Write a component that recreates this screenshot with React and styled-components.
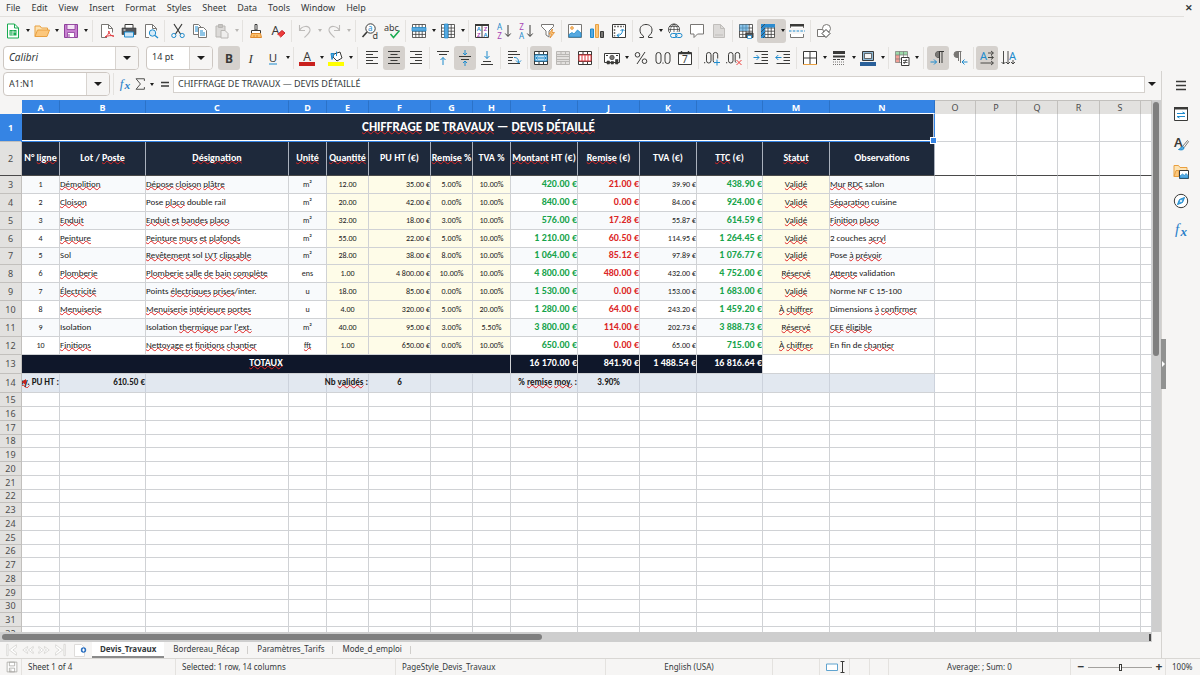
import React, { useState } from "react"
import styled, { createGlobalStyle, css } from "styled-components"

const UI_FONT = `"Noto Sans", "Open Sans", sans-serif`
const CELL_FONT = `Carlito, Lato, sans-serif`

const blue = "#1e8bcd"
const dark = "#3a3a38"
const grey = "#797774"
const accent = "#3584e4"

const GlobalStyle = createGlobalStyle`
    * {
        box-sizing: border-box;
    }
    body {
        margin: 0;
        background: #f6f5f4;
        color: #33383a;
        font-family: ${UI_FONT};
        font-size: 9px;
        overflow: hidden;
    }
    button, input {
        font: inherit;
        color: inherit;
    }
    button {
        border: 0;
        padding: 0;
        background: none;
    }
`

/* ---------- icons, all drawn on a 16 x 16 grid ---------- */

const glyph = (text, x, y, size, fill, extra) => (
    <text x={x} y={y} fontSize={size} fill={fill} stroke="none" fontFamily={UI_FONT} {...extra}>{text}</text>
)

const gridLines = <path d="M1.5 1.5h13v13h-13zM1.5 5h13M1.5 8.200h13M1.5 11.400h13M4.800 1.500v13M8 1.500v13M11.200 1.500v13" stroke={dark} strokeWidth=".8" />

const icons = {
    newDoc: <>
        <path d="M2.500 1h7l4 4v10h-11z" fill="#fff" stroke="#18ab50" />
        <path d="M9.500 1v4h4" stroke="#18ab50" />
        <path d="M4.500 7h7v5.500h-7z" fill="#18ab50" stroke="none" />
        <path d="M5 9h6M5 11h3M8 7.500v5" stroke="#fff" strokeWidth=".7" />
    </>,
    open: <>
        <path d="M1 13.500V3h5l1.500 2h6v2.500" fill="#fde3b3" stroke="#e9a040" />
        <path d="M1 13.500l2.500-6.500h12l-2.500 6.500z" fill="#fcc77c" stroke="#e9a040" />
    </>,
    save: <>
        <path d="M1.500 1.500h13v13h-13z" fill="#c77fd0" stroke="#8e3f9b" />
        <path d="M4 1.500h8v5H4z" fill="#f5e5f7" stroke="#8e3f9b" strokeWidth=".8" />
        <path d="M4.500 9.500h7v5h-7z" fill="#fff" stroke="#8e3f9b" strokeWidth=".8" />
        <path d="M6 11v3" stroke="#8e3f9b" />
    </>,
    pdf: <>
        <path d="M8 14.500H2.500v-13h7l4 4v4" fill="#fff" stroke={grey} />
        <path d="M9.500 1.500v4h4" stroke={grey} />
        <path d="M6 14c3-1.500 4-4 3.800-6 .5 3 2 5 5.200 5.200-3-1.200-6-.5-9 .8z" stroke="#e0393e" />
    </>,
    print: <>
        <path d="M4 5V1.500h8V5" fill="#fff" stroke={dark} />
        <path d="M1 5h14v6.500H1z" fill="#55565a" stroke={dark} strokeWidth=".6" />
        <path d="M3.500 9h9v5h-9z" fill="#cfe6f7" stroke={blue} />
        <path d="M2.500 7h2" stroke="#fff" />
    </>,
    preview: <>
        <path d="M6 14.500H2.500v-13h7l4 4v2" fill="#fff" stroke={grey} />
        <path d="M9.500 1.500v4h4" stroke={grey} />
        <circle cx="9.500" cy="10" r="3.200" fill="#d6ebf8" stroke={blue} />
        <path d="M12 12.500l3 2.500" stroke={blue} strokeWidth="1.300" />
    </>,
    cut: <>
        <path d="M4 1l6.500 10M12 1L5.500 11" stroke={dark} strokeWidth="1.200" />
        <circle cx="3.800" cy="12.500" r="2.100" stroke={blue} />
        <circle cx="12.200" cy="12.500" r="2.100" stroke={blue} />
    </>,
    copy: <>
        <path d="M1.500 1.500h5l2.500 2.500v7.500h-7.500z" fill="#fff" stroke={grey} />
        <path d="M6.500 4.500h5l3 3v7h-8z" fill="#fff" stroke={grey} />
        <path d="M3 4h3M3 6h3M3 8h3M8 8h3M8 10h5M8 12h5" stroke={blue} />
    </>,
    paste: <>
        <path d="M2 3h9v11H2z" fill="#dcdad8" stroke="#b9b7b4" />
        <path d="M4.500 1.500h4v3h-4z" fill="#c6c4c1" stroke="#b9b7b4" />
        <path d="M7 7.500h4l3 3v4.500H7z" fill="#efeeed" stroke="#b9b7b4" />
    </>,
    clone: <>
        <path d="M7 1.500h2v5.500H7z" fill="#fff" stroke={dark} />
        <path d="M3.500 7.500h9v3h-9z" fill="#fff" stroke={dark} />
        <path d="M3.500 10.500l-1 4h11l-1-4z" fill="#fbc16e" stroke="#e08a2e" />
        <path d="M6 14v-2M9 14v-2" stroke="#e08a2e" />
    </>,
    clear: <>
        {glyph("A", 1.500, 11.500, 12.500, dark)}
        <path d="M7.500 11.500l4.500-4 3 2.500-4.500 4.200z" fill="#ed3d3b" stroke="#c8262c" />
        <path d="M7.500 11.500l3 2.700" stroke="#fff" strokeWidth=".8" />
    </>,
    undo: <path d="M2.500 2v5.500H8M2.500 7.500C5 2.500 12 2 13 6.500c.5 3-3 5.500-5.500 8" stroke="#bdbbb9" strokeWidth="1.100" />,
    redo: <path d="M13.500 2v5.500H8M13.500 7.500C11 2.500 4 2 3 6.500c-.5 3 3 5.500 5.500 8" stroke="#bdbbb9" strokeWidth="1.100" />,
    find: <>
        <circle cx="8.500" cy="5.500" r="4.700" fill="#fff" stroke={dark} />
        <path d="M5 9l-4.500 5" stroke={dark} strokeWidth="1.600" />
        {glyph("a", 6, 8, 8, blue)}
        {glyph("d", 10.500, 15.500, 9, dark)}
    </>,
    spell: <>
        {glyph("abc", 0, 7.500, 9, dark)}
        <path d="M6.500 11l3 3.500 6-7" stroke="#18ab50" strokeWidth="1.500" />
    </>,
    row: <>
        <path d="M1.500 1.500h13v13h-13z" fill="#fff" stroke="none" />
        {gridLines}
        <path d="M1 4.500h14v3.500H1z" fill="#57a9e0" stroke={blue} strokeWidth=".7" />
    </>,
    column: <>
        <path d="M1.500 1.500h13v13h-13z" fill="#fff" stroke="none" />
        {gridLines}
        <path d="M4.500 1h3.500v14H4.500z" fill="#57a9e0" stroke={blue} strokeWidth=".7" />
    </>,
    sort: <>
        <path d="M1.500 1.500h13v13h-13z" fill="#fff" stroke={dark} />
        <path d="M1 1h14v2H1z" fill={dark} stroke="none" />
        <path d="M8 3v12" stroke={dark} />
        {glyph("A", 2.800, 8.200, 6, blue, { fontWeight: 600 })}
        {glyph("Z", 3, 14, 6, "#a845b5", { fontWeight: 600 })}
        {glyph("Z", 9.700, 8.200, 6, "#a845b5", { fontWeight: 600 })}
        {glyph("A", 9.500, 14, 6, blue, { fontWeight: 600 })}
    </>,
    sortAsc: <>
        {glyph("A", 1, 6.500, 8, blue)}
        {glyph("Z", 1.200, 15.500, 8, "#a845b5")}
        <path d="M12 2v11M9.300 10.500l2.700 3 2.700-3" stroke={dark} />
    </>,
    sortDesc: <>
        {glyph("Z", 1.200, 6.500, 8, "#a845b5")}
        {glyph("A", 1, 15.500, 8, blue)}
        <path d="M12 2v11M9.300 10.500l2.700 3 2.700-3" stroke={dark} />
    </>,
    filter: <>
        <path d="M1.500 1.500h12v2L9 8v6l-3-2V8L1.500 3.500z" fill="#fff" stroke={grey} />
        <path d="M12.500 6L9 11h2.500l-1.500 4 4.500-5.500H12z" fill="#fcc77c" stroke="#e08a2e" strokeWidth=".8" />
    </>,
    image: <>
        <path d="M1.500 1.500h13v13h-13z" fill="#fff" stroke={grey} />
        <circle cx="5" cy="5" r="1.400" fill="#fcc77c" stroke="#e08a2e" strokeWidth=".7" />
        <path d="M2 14v-2.500l3-2 2 1.500 3.500-4L14 10v4z" fill="#57a9e0" stroke={blue} strokeWidth=".8" />
    </>,
    chart: <>
        <path d="M1.500 6h3v8.500h-3z" fill="#57a9e0" stroke={blue} />
        <path d="M6.500 1.500h3v13h-3z" fill="#fcc77c" stroke="#e9a040" />
        <path d="M11.500 8.500h3v6h-3z" fill={grey} stroke={dark} />
    </>,
    pivot: <>
        <path d="M1.500 1.500h13v13h-13z" fill="#fff" stroke={dark} />
        <path d="M3 3.500h10M3.500 6v7.500" stroke={grey} strokeWidth="1.500" strokeDasharray="2 1" />
        <path d="M6 12.500c3.500 0 5.500-2 5.500-5.500M9.500 8l2-2 2 2M8 10.500l-2 2 2 1.500" stroke={blue} />
    </>,
    omega: <path d="M1.500 14.500h4v-1.500C3 11.500 2 9.500 2 7c0-3.500 2.500-5.500 6-5.500S14 3.500 14 7c0 2.500-1 4.500-3.500 6v1.500h4" stroke={dark} />,
    link: <>
        <circle cx="7" cy="6.500" r="5.500" fill="#fff" stroke={dark} strokeWidth=".9" />
        <path d="M1.500 6.500h11M7 1v11M2.500 3.500h9M4.500 11c-2-3-1-8 2.500-10 3.500 2 4.500 6 2.500 9" stroke={dark} strokeWidth=".7" />
        <path d="M3 9h13v7H3z" fill="#f6f5f4" stroke="none" />
        <rect x="3.500" y="10.500" width="6.500" height="4" rx="2" stroke={blue} />
        <rect x="8.500" y="10.500" width="6.500" height="4" rx="2" stroke={blue} />
    </>,
    comment: <path d="M1.500 1.500h13v9.500H8.500L5 14.500V11H1.500z" fill="#fff" stroke={grey} />,
    page: <>
        <path d="M2.500 1.500h7l4 4v9h-11z" fill="#dcdad8" stroke="#c0bebb" />
        <path d="M9.500 1.500v4h4M4 12h8" stroke="#c0bebb" />
    </>,
    printArea: <>
        <path d="M1.500 1.500h13v12h-13z" fill="#fff" stroke="none" />
        {gridLines}
        <path d="M1.500 1.500h9v6.500h-9z" fill="#57a9e0" stroke="none" opacity=".7" />
        <path d="M8 10h7v4.500H8z" fill="#55565a" stroke={dark} />
        <path d="M9.500 12.500h4v3h-4z" fill="#fff" stroke={blue} strokeWidth=".8" />
    </>,
    freeze: <>
        <path d="M1.500 1.500h13v13h-13z" fill="#fff" stroke="none" />
        {gridLines}
        <path d="M1 1h4v14H1zM5 1h10v3.500H5z" fill="#2a8bd0" stroke="none" />
        <path d="M1 5l4-4M1 9l4-4M1 13l4-4M3 15l2-2" stroke={dark} strokeWidth=".7" />
    </>,
    split: <>
        <path d="M1.500 5V1.500h13V5M1.500 11v3.500h13V11" fill="#fff" stroke={grey} />
        <path d="M1 1h14v2.500H1z" fill={dark} stroke="none" />
        <path d="M0 8h16" stroke={blue} strokeDasharray="2.500 1.300" strokeWidth="1.200" />
    </>,
    shapes: <>
        <path d="M1.500 6.500h7v7h-7z" fill="#fff" stroke={grey} />
        <circle cx="10.500" cy="5.500" r="4" fill="#fff" stroke={grey} />
        <path d="M10 6.500l4 4-4 4-4-4z" fill="#fff" stroke={dark} />
    </>,
    bold: glyph("B", 4, 12.500, 12, dark, { fontWeight: 700 }),
    italic: glyph("I", 5.500, 12.500, 13, dark, { fontFamily: "Liberation Serif, serif", fontStyle: "italic" }),
    underline: <>
        {glyph("U", 3.800, 11.500, 11.500, dark)}
        <path d="M4 14h8" stroke={blue} />
    </>,
    fontColor: <>
        {glyph("A", 4.200, 10.500, 12, dark)}
        <path d="M0 12h16v4H0z" fill="#c9211e" stroke="none" />
    </>,
    fill: <>
        <path d="M6 4l6-2 2 6-5 3-4-4z" fill="#fff" stroke={dark} />
        <path d="M8.500 6V1.500M3 3.500h3L4 9.500z" fill="#57a9e0" stroke={blue} />
        <path d="M0 12h16v4H0z" fill="#ffff00" stroke="none" />
    </>,
    alignLeft: <path d="M2 1.500h12M2 4.500h7M2 7.500h12M2 10.500h7M2 13.500h12" stroke={dark} />,
    alignCenter: <path d="M2 1.500h12M4.500 4.500h7M2 7.500h12M4.500 10.500h7M2 13.500h12" stroke={dark} />,
    alignRight: <path d="M2 1.500h12M7 4.500h7M2 7.500h12M7 10.500h7M2 13.500h12" stroke={dark} />,
    alignTop: <>
        <path d="M2 1.500h12M4 4.500h8" stroke={dark} />
        <path d="M8 15V7.500M5.500 10L8 7.500l2.500 2.500" stroke={blue} />
    </>,
    alignMiddle: <>
        <path d="M2 6.500h12M4 9.500h8" stroke={dark} />
        <path d="M8 0v5M6 3l2 2 2-2M8 16v-5M6 13l2-2 2 2" stroke={blue} />
    </>,
    alignBottom: <>
        <path d="M4 11.500h8M2 14.500h12" stroke={dark} />
        <path d="M8 1v7.500M5.500 6L8 8.500 10.500 6" stroke={blue} />
    </>,
    wrap: <>
        <path d="M2 1.500h9M2 4.500h12M2 7.500h5M2 10.500h4M2 13.500h12" stroke={dark} />
        <path d="M8 7.500c3 0 4.500 1 4.500 5M10 10.500l2.500 2.500 2.500-2.500" stroke={blue} />
    </>,
    mergeCenter: <>
        <path d="M1.500 1.500h13v13h-13z" fill="#fff" stroke="none" />
        <path d="M1.500 1.500h13v13h-13zM1.500 4.500h13M1.500 11.500h13M6 1.500v3M10.500 1.500v3M6 11.500v3M10.500 11.500v3" stroke={dark} />
        <path d="M2 5h12v6H2z" fill="#bfe0f5" stroke={blue} />
        <path d="M3 8h10M4.500 6.500L3 8l1.500 1.500M11.500 6.500L13 8l-1.500 1.500" stroke={blue} />
    </>,
    mergeCells: <>
        <path d="M1.500 1.500h13v13h-13zM1.500 4.500h13M1.500 11.500h13M6 1.500v3M10.500 1.500v3M6 11.500v3M10.500 11.500v3" fill="#e2e0de" stroke="#b9b7b4" />
        <path d="M2 6.500h12M2 9.500h12" stroke="#b9b7b4" />
    </>,
    unmerge: <>
        <path d="M1.500 1.500h13v13h-13zM1.500 4.500h13M1.500 11.500h13M6 1.500v3M10.500 1.500v3M6 11.500v3M10.500 11.500v3" fill="#fff" stroke={dark} />
        <path d="M2 5h12v6H2zM5 5v6M8 5v6M11 5v6" fill="#fff" stroke="#e0393e" />
    </>,
    currency: <>
        <path d="M.5 3.500h15v9H.5z" fill="#fff" stroke={dark} />
        <circle cx="8" cy="7.500" r="2.200" fill={grey} stroke={dark} strokeWidth=".7" />
        <path d="M2 5.500h2M12 5.500h2" stroke={dark} />
        <path d="M3 14v-3h2.500v3zM7 14v-2.500h2.500V14zM11.500 14V9.500H14V14z" fill={dark} stroke={dark} strokeWidth=".6" />
    </>,
    percent: <>
        <circle cx="4.500" cy="4.800" r="2.300" stroke={dark} />
        <circle cx="11.500" cy="11.200" r="2.300" stroke={dark} />
        <path d="M12 2L4 14" stroke={dark} />
    </>,
    number: <>
        <rect x="1" y="2.500" width="5" height="11" rx="2.500" stroke={dark} />
        <path d="M8 12.500v1.200" stroke={dark} />
        <rect x="10" y="2.500" width="5" height="11" rx="2.500" stroke={dark} />
    </>,
    date: <>
        <path d="M1.500 2.500h13v12h-13z" fill="#fff" stroke={dark} />
        <path d="M1.500 3.500h13M4.500 1v3M11.500 1v3" stroke={dark} strokeWidth="1.400" />
        {glyph("7", 5, 13, 10, dark)}
    </>,
    addDecimal: <>
        <path d="M.7 12v1.300" stroke={dark} />
        <rect x="2.500" y="2.500" width="4.500" height="10.500" rx="2.200" stroke={dark} />
        <path d="M13.700 8.500V4.700a2.200 2.200 0 0 0-4.500 0v6a2.200 2.200 0 0 0 1.500 2.100" stroke={dark} />
        <path d="M13 9.500v6M10 12.500h6" stroke={blue} />
    </>,
    delDecimal: <>
        <path d="M.7 12v1.300" stroke={dark} />
        <rect x="2.500" y="2.500" width="4.500" height="10.500" rx="2.200" stroke={dark} />
        <path d="M13.700 8.500V4.700a2.200 2.200 0 0 0-4.500 0v6a2.200 2.200 0 0 0 1 2" stroke={dark} />
        <path d="M10.500 10l5 5M15.500 10l-5 5" stroke="#ed3d3b" />
    </>,
    indent: <>
        <path d="M1.500 1.500H15M8.500 4.500H15M8.500 7.500H15M8.500 10.500H15M1.500 13.500H15" stroke={dark} />
        <path d="M.5 7.500H6M3.500 5L6 7.500 3.500 10" stroke={blue} />
    </>,
    outdent: <>
        <path d="M1.500 1.500H15M8.500 4.500H15M8.500 7.500H15M8.500 10.500H15M1.500 13.500H15" stroke={dark} />
        <path d="M.8 7.500H6.500M3.300 5L.8 7.500 3.300 10" stroke={blue} />
    </>,
    borders: <>
        <path d="M1.500 1.500h13v13h-13z" fill="#fff" stroke={dark} />
        <path d="M8 1.500v13M1.500 8h13" stroke={dark} />
        <path d="M1 14.500h14" stroke="#e9a040" />
    </>,
    lineStyle: <>
        <path d="M2 2.500h12" stroke={dark} strokeWidth="3" />
        <path d="M2 6.500h12" stroke={dark} strokeWidth="2" />
        <path d="M2 9.500h12" stroke={dark} strokeDasharray="3 1" />
        <path d="M2 12h12M2 14.500h12" stroke={grey} strokeDasharray="1 1" />
    </>,
    borderColor: <>
        <path d="M2.500 1.500h11v9h-11z" fill="#8fb8d4" stroke={dark} />
        <path d="M4.500 3.500h7v5h-7z" fill="#f6f5f4" stroke={dark} strokeWidth=".7" />
        <path d="M0 12h16v4H0z" fill="#2a6099" stroke="none" />
    </>,
    conditional: <>
        <path d="M1.500 1.500h12v11h-12z" fill="#fff" stroke="none" />
        <path d="M1.500 1.500h12v3.500h-12z" fill="#9bd9a9" stroke="none" />
        <path d="M1.500 5h4v7.500h-4z" fill="#f2a097" stroke="none" />
        <path d="M1.500 1.500h12v11h-12zM1.500 5h12M1.500 9h12M5.500 1.500v11M9.500 1.500v11" stroke={grey} strokeWidth=".7" />
        <path d="M7.500 7.500h7.500v8H7.500z" fill="#fff" stroke={dark} />
        <path d="M9 10.500h4.500M9 12.500h4.500M12.500 9l-2.500 5" stroke={dark} strokeWidth=".8" />
    </>,
    ltr: <>
        <path d="M14 1.500H8.500a3 3 0 0 0 0 6h1M9.500 1.500V13M12 1.500V13" stroke={dark} />
        <path d="M9 2H8a2.500 2.500 0 0 0 0 5h1z" fill={grey} stroke="none" />
        <path d="M.5 12h6M4 9.500L6.500 12 4 14.500" stroke={blue} />
    </>,
    rtl: <>
        <path d="M9.500 1.500H5a3 3 0 0 0 0 6h1.500M6.500 1.500V11M8.500 1.500V13" stroke={grey} />
        <path d="M6.500 1.500H5a3 3 0 0 0 0 6h1.500z" fill={grey} stroke="none" />
        <path d="M15.500 12h-5.500M12.500 9.500L10 12l2.500 2.500" stroke={blue} />
    </>,
    textLtr: <>
        {glyph("A", 1, 9.500, 11, blue)}
        <path d="M9 3h5M12 1l2.500 2L12 5M9 7.500h5M12 5.500l2.500 2-2.500 2M1.500 13h12.500M12 11l2.500 2-2.500 2" stroke={dark} strokeWidth=".9" />
    </>,
    textTtb: <>
        {glyph("A", 8, 9.500, 11, blue)}
        <path d="M2.500 1v13M.5 12l2 2 2-2M7 1v13M5 12l2 2 2-2M12 10v4M10 12l2 2 2-2" stroke={dark} strokeWidth=".9" />
    </>,
    fx: <>
        {glyph("f", 2, 12, 15, "#2a7fc9", { fontFamily: "Liberation Serif, serif", fontStyle: "italic" })}
        {glyph("x", 7.500, 14, 13, "#2a7fc9", { fontFamily: "Liberation Serif, serif", fontStyle: "italic", fontWeight: 700 })}
    </>,
    sum: <path d="M13 4.500V2H3.500l5 6-5 6H13v-2.500" stroke={dark} />,
    equals: <path d="M4 6.500h8M4 10h8" stroke={dark} strokeWidth="1.500" />,
    menu: <path d="M3 4.500h10M3 8.500h10M3 12.500h10" stroke={dark} strokeWidth="1.400" />,
    properties: <>
        <path d="M1.500 1.500h13v13h-13z" fill="#fff" stroke={dark} />
        <path d="M1 1h14v2.500H1z" fill={dark} stroke="none" />
        <path d="M4 7.500h8M9.500 6L12 7.500M4 10.500h8M6.500 12L4 10.500" stroke={blue} />
    </>,
    styles: <>
        {glyph("A", 1, 11.500, 13, dark, { fontWeight: 600 })}
        <path d="M14.500 5.500l-5 6 1.500 1.200 4.500-6z" fill="#fff" stroke={grey} />
        <path d="M9.500 11.500c-2 0-1.500 2.500-4 3 3 .8 5.500.5 5.500-1.800z" fill="#57a9e0" stroke={blue} />
    </>,
    gallery: <>
        <path d="M1 12.500V1.500h4.500L7 3.500h7v3" fill="#fde3b3" stroke="#e9a040" />
        <path d="M1 12.500l2-6h3v6z" fill="#fcc77c" stroke="#e9a040" />
        <path d="M6.500 6.500h9v8h-9z" fill="#fff" stroke={dark} />
        <path d="M7 14v-2l2.500-2 2 1.500 1.500-2 2 2V14z" fill="#57a9e0" stroke={blue} strokeWidth=".7" />
    </>,
    navigator: <>
        <circle cx="8" cy="8" r="6.700" fill="#fff" stroke={dark} />
        <path d="M11.500 4.500l-2 5-5 2 2-5z" fill="#57a9e0" stroke={blue} />
        <circle cx="8" cy="8" r="1" fill="#fff" stroke="none" />
    </>,
    addSheet: <>
        <path d="M1.500 2.500h7l3 3v9h-10z" fill="#fff" stroke="#dedcda" />
        <circle cx="10.500" cy="8" r="2.700" fill="#2a6fc0" stroke="none" />
        <path d="M9 8h3M10.500 6.500v3" stroke="#fff" />
    </>,
    first: <path d="M2 1.500v13h1.500v-13zM13 2L5 8l8 6v-3L9 8l4-3z" fill="#fff" stroke="#d0cecb" strokeWidth=".8" />,
    prev: <path d="M7.500 4L2 8l5.500 4v-2L5 8l2.500-2zM14 4L8.500 8l5.500 4v-2L11.500 8 14 6z" fill="#fff" stroke="#d0cecb" strokeWidth=".8" />,
    next: <path d="M8.500 4L14 8l-5.500 4v-2L11 8 8.500 6zM2 4l5.500 4L2 12v-2l2.500-2L2 6z" fill="#fff" stroke="#d0cecb" strokeWidth=".8" />,
    last: <path d="M12.500 1.500v13H14v-13zM3 2l8 6-8 6v-3l4-3-4-3z" fill="#fff" stroke="#d0cecb" strokeWidth=".8" />,
    disk: <>
        <path d="M1.500 1.500h13v13h-13z" fill="#fff" stroke="#a3a19e" />
        <path d="M4.500 1.500h7v5h-7zM4.500 9.500h7v5h-7zM6.500 11v3" stroke="#a3a19e" />
    </>,
    insertMode: <>
        <path d="M.5 5h11v6.500H.5z" fill="#fff" stroke="#5fa3cf" />
        <path d="M14.500 2.500h4M14.500 13.500h4M16.500 2.500v11" stroke={dark} />
    </>,
}

const Svg = styled.svg`
    display: block;
    flex: none;
    width: ${(props) => props.$size || 16}px;
    height: ${(props) => props.$size || 16}px;
    overflow: visible;
`

const Icon = ({ name, size }) => (
    <Svg viewBox="0 0 16 16" fill="none" $size={size} aria-hidden="true">{icons[name]}</Svg>
)

const Arrow = styled.span`
    flex: none;
    border-left: ${(props) => props.$size || 2}px solid transparent;
    border-right: ${(props) => props.$size || 2}px solid transparent;
    border-top: ${(props) => props.$size || 3}px solid ${(props) => (props.$dim ? "#b9b7b4" : "#1d1d1c")};
`

/* ---------- menu bar and toolbars ---------- */

const Window = styled.div`
    display: flex;
    flex-direction: column;
    height: 100vh;
`

const MenuBar = styled.nav`
    display: flex;
    align-items: center;
    gap: 11px;
    height: 17px;
    margin-right: 16px;
    padding-left: 6px;
    border-bottom: 1px solid #e2e0dd;
    flex: none;
`

const MenuItem = styled.button`
    line-height: 16px;
`

const CloseButton = styled.button`
    margin: 0 -9px 0 auto;
    font-weight: 700;
    line-height: 16px;
`

const Bar = styled.div`
    display: flex;
    align-items: center;
    flex: none;
    height: 27px;
    padding-left: ${(props) => props.$indent || 2}px;
`

const ToolGroup = styled.span`
    display: flex;
    align-items: center;
    flex: none;
    height: 24px;
    width: ${(props) => (props.$drop ? 29 : 22)}px;
    border-radius: 3px;
    background: ${(props) => (props.$on ? "#d5d1cd" : "none")};
`

const ToolButton = styled.button`
    display: flex;
    align-items: center;
    justify-content: center;
    width: 22px;
    height: 24px;
`

const DropButton = styled.button`
    display: flex;
    align-items: center;
    justify-content: center;
    width: 7px;
    height: 24px;
`

const Separator = styled.span`
    flex: none;
    width: 1px;
    height: 22px;
    margin: 0 ${(props) => (props.$wide ? 3 : 2)}px;
    background: #e4e2df;
`

const Combo = styled.div`
    display: flex;
    flex: none;
    width: ${(props) => props.$width}px;
    height: 24px;
    margin-right: ${(props) => props.$gap || 0}px;
    border: 1px solid #cdc7c2;
    border-radius: 4px;
    background: #fff;
    overflow: hidden;
`

const ComboInput = styled.input`
    flex: 1;
    min-width: 0;
    border: 0;
    padding: 0 5px 2px;
    outline: 0;
    background: none;
    font-size: ${(props) => (props.$italic ? 10 : 9)}px;
    font-style: ${(props) => (props.$italic ? "italic" : "normal")};
`

const ComboButton = styled.button`
    display: flex;
    align-items: center;
    justify-content: center;
    width: 23px;
    border-left: 1px solid #d8d4d0;
    background: #f6f5f4;
`

const Tool = ({ name, label, drop, on, dim, size }) => (
    <ToolGroup $drop={drop} $on={on}>
        <ToolButton aria-label={label || name}><Icon name={name} size={size} /></ToolButton>
        {drop && <DropButton aria-label={`${label || name} options`}><Arrow $dim={dim} /></DropButton>}
    </ToolGroup>
)

const ComboBox = ({ label, width, gap, italic, initial }) => {
    const [value, setValue] = useState(initial)
    return (
        <Combo $width={width} $gap={gap}>
            <ComboInput aria-label={label} $italic={italic} value={value} onChange={(e) => setValue(e.target.value)} />
            <ComboButton aria-label={`${label} list`}><Arrow $size={4} /></ComboButton>
        </Combo>
    )
}

// "|" is a separator, "||" a wide one; flags: v = drop-down, * = pressed, - = disabled
const standardBar = "newDoc:v open:v save:v || pdf print preview | cut copy paste:v- | clone clear | undo:v- redo:v- || find spell | row:v column:v | sort sortAsc sortDesc filter | image chart pivot | omega:v link comment page | printArea freeze:v* split | shapes".split(" ")
const formatBar = "bold:* italic underline:v | fontColor:v fill:v || alignLeft alignCenter:* alignRight | alignTop alignMiddle:* alignBottom | wrap | mergeCenter:* mergeCells unmerge | currency:v percent number date | addDecimal delDecimal | indent outdent | borders:v lineStyle:v borderColor:v | conditional:v || ltr:* rtl | textLtr:* textTtb".split(" ")

const Tools = ({ items }) => items.map((item, i) => {
    if (item[0] === "|") return <Separator key={i} $wide={item === "||"} />
    const [name, flags = ""] = item.split(":")
    return <Tool key={i} name={name} size={16} drop={flags.includes("v")} on={flags.includes("*")} dim={flags.includes("-")} />
})

/* ---------- work area ---------- */

const Workspace = styled.div`
    display: flex;
    flex: 1;
    min-height: 0;
`

const Main = styled.main`
    display: flex;
    flex-direction: column;
    flex: 1;
    min-width: 0;
`

const FormulaBar = styled.div`
    display: flex;
    align-items: center;
    flex: none;
    height: 29px;
    padding: 0 5px 3px 3px;
`

const SmallButton = styled.button`
    display: flex;
    align-items: center;
    justify-content: center;
    flex: none;
    width: ${(props) => props.$width}px;
    height: 22px;
`

const FormulaInput = styled.input`
    flex: 1;
    min-width: 0;
    height: 17px;
    margin-right: 3px;
    padding: 0 4px 1px;
    border: 1px solid #d5d1cd;
    outline: 0;
    background: #fff;
`

const SheetArea = styled.div`
    display: flex;
    flex: 1;
    min-height: 0;
`

const SheetView = styled.div`
    flex: 1;
    min-width: 0;
    overflow: hidden;
    background: #fff;
`

const Table = styled.table`
    width: 100%;
    table-layout: fixed;
    border-collapse: separate;
    border-spacing: 0;
    font-family: ${CELL_FONT};
    font-size: 9px;
    line-height: 12px;
    color: #1a1a1a;
`

const Row = styled.tr`
    height: ${(props) => props.$height}px;
`

const headCell = css`
    padding: 0;
    font-family: ${UI_FONT};
    font-size: 9px;
    line-height: 10px;
    text-align: center;
    overflow: hidden;
    font-weight: ${(props) => (props.$on ? 700 : 400)};
    color: ${(props) => (props.$on ? "#fff" : "#4d4d4d")};
    background: ${(props) => (props.$on ? accent : "#e2e1df")};
`

const ColHead = styled.th`
    ${headCell}
    border-right: 1px solid ${(props) => (props.$on ? "#2b72c8" : "#c2c0bd")};
    border-top: 1px solid ${(props) => (props.$on ? accent : "#c2c0bd")};
`

const Corner = styled.td`
    padding: 0;
    background: #f6f5f4;
`

const RowHead = styled.th`
    ${headCell}
    border-right: 1px solid ${(props) => (props.$on ? accent : "#c2c0bd")};
    border-bottom: 1px solid ${(props) => (props.$frozen ? "#4a4a4a" : "#c2c0bd")};
`

const Cell = styled.td`
    padding: 0 0 2px;
    overflow: ${(props) => (props.$spill ? "visible" : "hidden")};
    white-space: nowrap;
    border-right: 1px solid ${(props) => props.$edge || "#d0d2d5"};
    border-bottom: 1px solid ${(props) => (props.$frozen ? "#4a4a4a" : "#d0d2d5")};
    text-align: ${(props) => props.$align || "left"};
    background: ${(props) => props.$bg || "#fff"};
    color: ${(props) => props.$color || "inherit"};
    font-size: ${(props) => props.$size || 9}px;
    font-weight: ${(props) => (props.$bold ? 700 : 400)};
`

const SelectedCell = styled(Cell)`
    position: relative;
    overflow: visible;
    border: 0;

    &::before {
        content: "";
        position: absolute;
        inset: -1px 0 0 -1px;
        border: 1px solid ${accent};
        border-top-color: #fff;
        box-shadow: inset 0 -1px 0 0 #fff, inset -1px 0 0 0 #b9c4d4;
    }

    &::after {
        content: "";
        position: absolute;
        right: -2px;
        bottom: -2px;
        width: 5px;
        height: 5px;
        border: 1px solid #fff;
        background: ${accent};
    }
`

const AlignEnd = styled.div`
    display: flex;
    justify-content: flex-end;
`

const Truncated = styled(AlignEnd)`
    position: relative;
    overflow: hidden;

    &::before {
        content: "";
        position: absolute;
        left: 0;
        top: 3px;
        border: 3px solid transparent;
        border-right: 4px solid #c9211e;
        border-left: 0;
    }
`

const Misspelled = styled.span`
    text-decoration: underline wavy #e02424 1px;
    text-decoration-skip-ink: none;
    text-underline-offset: -1px;
`

// words between asterisks carry the spell-check underline
const Spelled = ({ children }) => children.split("*").map((part, i) => (
    i % 2 ? <Misspelled key={i}>{part}</Misspelled> : part
))

const columns = [38, 86, 143, 38, 42, 62, 42, 38, 67, 62, 57, 66, 67, 105, 41, 41, 41, 42, 41]
const letters = "ABCDEFGHIJKLMNOPQRS".split("")

const headings = [
    "N° *ligne*", "Lot / *Poste*", "*Désignation*", "*Unité*", "*Quantité*", "PU HT (€)", "*Remise* %",
    "TVA %", "*Montant* HT (€)", "*Remise* (€)", "TVA (€)", "*TTC* (€)", "*Statut*", "Observations",
]

const quoteLines = [
    ["1", "*Démolition*", "*Dépose* *cloison* *plâtre*", "m²", "12.00", "35.00 €", "5.00%", "10.00%", "420.00 €", "21.00 €", "39.90 €", "438.90 €", "*Validé*", "*Mur* *RDC* salon"],
    ["2", "*Cloison*", "Pose *placo* double rail", "m²", "20.00", "42.00 €", "0.00%", "10.00%", "840.00 €", "0.00 €", "84.00 €", "924.00 €", "*Validé*", "*Séparation* cuisine"],
    ["3", "*Enduit*", "*Enduit* *et* *bandes* *placo*", "m²", "32.00", "18.00 €", "3.00%", "10.00%", "576.00 €", "17.28 €", "55.87 €", "614.59 €", "*Validé*", "*Finition* *placo*"],
    ["4", "*Peinture*", "*Peinture* *murs* *et* *plafonds*", "m²", "55.00", "22.00 €", "5.00%", "10.00%", "1 210.00 €", "60.50 €", "114.95 €", "1 264.45 €", "*Validé*", "2 couches *acryl*"],
    ["5", "Sol", "*Revêtement* sol *LVT* *clipsable*", "m²", "28.00", "38.00 €", "8.00%", "10.00%", "1 064.00 €", "85.12 €", "97.89 €", "1 076.77 €", "*Validé*", "Pose *à* *prévoir*"],
    ["6", "*Plomberie*", "*Plomberie* *salle* *de* *bain* *complète*", "ens", "1.00", "4 800.00 €", "10.00%", "10.00%", "4 800.00 €", "480.00 €", "432.00 €", "4 752.00 €", "*Réservé*", "*Attente* validation"],
    ["7", "*Électricité*", "Points *électriques* *prises*/inter.", "u", "18.00", "85.00 €", "0.00%", "10.00%", "1 530.00 €", "0.00 €", "153.00 €", "1 683.00 €", "*Validé*", "Norme NF C 15-100"],
    ["8", "*Menuiserie*", "*Menuiserie* *intérieure* *portes*", "u", "4.00", "320.00 €", "5.00%", "20.00%", "1 280.00 €", "64.00 €", "243.20 €", "1 459.20 €", "*À* *chiffrer*", "Dimensions *à* *confirmer*"],
    ["9", "Isolation", "Isolation *thermique* par *l'ext.*", "m²", "40.00", "95.00 €", "3.00%", "5.50%", "3 800.00 €", "114.00 €", "202.73 €", "3 888.73 €", "*Réservé*", "*CEE* *éligible*"],
    ["10", "*Finitions*", "*Nettoyage* *et* *finitions* *chantier*", "*fft*", "1.00", "650.00 €", "0.00%", "10.00%", "650.00 €", "0.00 €", "65.00 €", "715.00 €", "*À* *chiffrer*", "En fin de *chantier*"],
]

const summary = ["610.50 €", "", "", "Nb *validés* :", "6", "", "", "% *remise* *moy.* :", "3.90%", "", "", "", ""]

const isInput = (c) => (c >= 4 && c <= 7) || c === 12

const lineStyle = (c) => {
    if (c === 8 || c === 11) return { $align: "right", $color: "#16a34a", $bold: true, $size: 10 }
    if (c === 9) return { $align: "right", $color: "#dc2626", $bold: true, $size: 10 }
    if (c === 5 || c === 10) return { $align: "right", $size: 8 }
    if (c === 1 || c === 2 || c === 13) return { $align: "left" }
    if (c === 12) return { $align: "center" }
    return { $align: "center", $size: 8 }
}

const Blanks = ({ count, frozen }) => Array.from({ length: count }, (_, i) => <Cell key={i} $frozen={frozen} />)

const Sheet = () => {
    const emptyRows = Array.from({ length: 18 }, (_, i) => i + 15)
    return (
        <Table>
            <colgroup>
                <col style={{ width: 22 }} />
                {columns.map((width, i) => <col key={i} style={{ width }} />)}
                <col />
            </colgroup>
            <thead>
                <Row $height={14}>
                    <Corner />
                    {letters.map((letter, i) => <ColHead key={letter} scope="col" $on={i < 14}>{letter}</ColHead>)}
                    <ColHead />
                </Row>
            </thead>
            <tbody>
                <Row $height={28}>
                    <RowHead scope="row" $on>1</RowHead>
                    <SelectedCell colSpan={14} $align="center" $bg="#1e293b" $color="#fff" $size={13} $bold>
                        <Spelled>*CHIFFRAGE* DE *TRAVAUX* — *DEVIS* *DÉTAILLÉ*</Spelled>
                    </SelectedCell>
                    <Blanks count={6} />
                </Row>
                <Row $height={34}>
                    <RowHead scope="row" $frozen>2</RowHead>
                    {headings.map((text, i) => (
                        <Cell key={i} $frozen $align="center" $bg="#1e293b" $color="#fff" $edge="#aab1bd" $size={10} $bold>
                            <Spelled>{text}</Spelled>
                        </Cell>
                    ))}
                    <Blanks count={6} frozen />
                </Row>
                {quoteLines.map((line, r) => (
                    <Row key={r} $height={r === 4 ? 17 : 18}>
                        <RowHead scope="row">{r + 3}</RowHead>
                        {line.map((text, c) => (
                            <Cell key={c} $bg={isInput(c) ? "#fefce8" : r % 2 ? "#fff" : "#f8fafc"} {...lineStyle(c)}>
                                <Spelled>{text}</Spelled>
                            </Cell>
                        ))}
                        <Blanks count={6} />
                    </Row>
                ))}
                <Row $height={19}>
                    <RowHead scope="row">13</RowHead>
                    <Cell colSpan={8} $align="center" $bg="#0f172a" $color="#fff" $size={10} $bold><Spelled>*TOTAUX*</Spelled></Cell>
                    {["16 170.00 €", "841.90 €", "1 488.54 €", "16 816.64 €"].map((total) => (
                        <Cell key={total} $align="right" $bg="#0f172a" $color="#fff" $size={10} $bold>{total}</Cell>
                    ))}
                    <Blanks count={8} />
                </Row>
                <Row $height={19}>
                    <RowHead scope="row">14</RowHead>
                    <Cell $bg="#e2e8f0" $edge="#ccd2dc" $bold><Truncated><span><Spelled>*Moy.* PU HT :</Spelled></span></Truncated></Cell>
                    {summary.map((text, i) => (
                        <Cell key={i} $spill $bg="#e2e8f0" $edge="#ccd2dc" $align={text === "6" || text === "3.90%" ? "center" : "right"} $bold>
                            {text.endsWith(":") ? <AlignEnd><span><Spelled>{text}</Spelled></span></AlignEnd> : text}
                        </Cell>
                    ))}
                    <Blanks count={6} />
                </Row>
                {emptyRows.map((n) => (
                    <Row key={n} $height={n % 4 === 2 ? 13 : 14}>
                        <RowHead scope="row">{n}</RowHead>
                        <Blanks count={20} />
                    </Row>
                ))}
            </tbody>
        </Table>
    )
}

const VTrack = styled.div`
    flex: none;
    width: 9px;
    padding: 2px 2px 0 1px;
    background: #cecece;
`

const VThumb = styled.div`
    height: 48%;
    border-radius: 3px;
    background: #7f7f7f;
`

const HTrack = styled.div`
    display: flex;
    align-items: center;
    justify-content: space-between;
    flex: none;
    height: 10px;
    margin-right: 9px;
    padding: 0 1px 0 2px;
    background: #cecece;
`

const HThumb = styled.div`
    width: 47%;
    height: 6px;
    border-radius: 3px;
    background: #7f7f7f;
`

const HGrip = styled.div`
    width: 2px;
    height: 7px;
    background: #4a4a4a;
`

const TabBar = styled.div`
    display: flex;
    align-items: stretch;
    flex: none;
    height: 16px;
    padding-left: 4px;
`

const TabNav = styled.button`
    display: flex;
    align-items: center;
    justify-content: center;
    width: 16px;
`

const AddTab = styled.button`
    display: flex;
    align-items: center;
    margin: 0 3px 0 5px;
    width: 16px;
`

const Tab = styled.button`
    position: relative;
    padding: 0 ${(props) => (props.$on ? 8 : 9)}px;
    font-size: 8px;
    line-height: 14px;
    font-weight: ${(props) => (props.$on ? 700 : 400)};
    background: ${(props) => (props.$on ? "#fff" : "none")};
    border-bottom: 2px solid ${(props) => (props.$on ? "#8b8b8b" : "transparent")};

    &::after {
        content: "";
        position: absolute;
        right: 0;
        top: 4px;
        height: 8px;
        width: ${(props) => (props.$on ? 0 : 1)}px;
        background: #d0cecb;
    }
`

const Sidebar = styled.aside`
    position: relative;
    display: flex;
    flex-direction: column;
    align-items: center;
    gap: 7px;
    flex: none;
    width: 39px;
    padding-top: 3px;
    border-left: 1px solid #d5d3d0;
`

const DeckButton = styled.button`
    display: flex;
    align-items: center;
    justify-content: center;
    width: 22px;
    height: 22px;
`

const Handle = styled.button`
    position: absolute;
    left: -1px;
    top: 268px;
    width: 5px;
    height: 50px;
    background: #919291;

    &::after {
        content: "";
        position: absolute;
        left: 1px;
        top: 22px;
        border: 3px solid transparent;
        border-left-color: #fff;
        border-right: 0;
    }
`

/* ---------- status bar ---------- */

const StatusBar = styled.footer`
    display: grid;
    grid-template-columns: 22px 154fr 220fr 210fr 167fr 47px 30px 20px 19px 182fr 95px 34px;
    flex: none;
    height: 17px;
    border-top: 1px solid #d9d7d4;
    font-size: 8px;
    line-height: 16px;
`

const StatusCell = styled.div`
    display: flex;
    align-items: center;
    justify-content: ${(props) => (props.$center ? "center" : "flex-start")};
    padding: 0 6px;
    white-space: nowrap;
    border-right: ${(props) => (props.$open ? 0 : 1)}px solid #e4e2df;
`

const ZoomCell = styled(StatusCell)`
    padding-right: 2px;
`

const ZoomSlider = styled.input`
    appearance: none;
    flex: 1;
    min-width: 0;
    height: 12px;
    margin: 0 3px;
    background: linear-gradient(#a3a19e, #a3a19e) center / 100% 1px no-repeat;

    &::-webkit-slider-thumb {
        appearance: none;
        width: 3px;
        height: 7px;
        border: 1px solid #3a3a38;
        background: #fff;
    }
`

const ZoomButton = styled.button`
    width: 8px;
    height: 12px;
    font-size: 12px;
    font-weight: 700;
    line-height: 12px;
`

const menus = ["File", "Edit", "View", "Insert", "Format", "Styles", "Sheet", "Data", "Tools", "Window", "Help"]
const decks = ["menu", "properties", "styles", "gallery", "navigator", "fx"]
const sheets = ["Devis_Travaux", "Bordereau_Récap", "Paramètres_Tarifs", "Mode_d_emploi"]

const App = () => {
    const [formula, setFormula] = useState("CHIFFRAGE DE TRAVAUX — DEVIS DÉTAILLÉ")
    const [zoom, setZoom] = useState(50)
    const [sheet, setSheet] = useState(0)

    return (
        <Window>
            <GlobalStyle />
            <MenuBar>
                {menus.map((menu) => <MenuItem key={menu}>{menu}</MenuItem>)}
                <CloseButton aria-label="Close document">✕</CloseButton>
            </MenuBar>
            <Bar>
                <Tools items={standardBar} />
            </Bar>
            <Bar $indent={3}>
                <ComboBox label="Font name" width={136} gap={7} italic initial="Calibri" />
                <ComboBox label="Font size" width={67} gap={5} initial="14 pt" />
                <Tools items={formatBar} />
            </Bar>
            <Workspace>
                <Main>
                    <FormulaBar>
                        <ComboBox label="Name box" width={107} gap={1} initial="A1:N1" />
                        <Separator />
                        <SmallButton $width={17} aria-label="Function wizard"><Icon name="fx" size={14} /></SmallButton>
                        <SmallButton $width={14} aria-label="Select function"><Icon name="sum" size={14} /></SmallButton>
                        <SmallButton $width={10} aria-label="Function list"><Arrow /></SmallButton>
                        <SmallButton $width={16} aria-label="Formula"><Icon name="equals" /></SmallButton>
                        <FormulaInput aria-label="Input line" value={formula} onChange={(e) => setFormula(e.target.value)} />
                        <SmallButton $width={8} aria-label="Expand formula bar"><Arrow $size={4} /></SmallButton>
                    </FormulaBar>
                    <SheetArea>
                        <SheetView><Sheet /></SheetView>
                        <VTrack><VThumb /></VTrack>
                    </SheetArea>
                    <HTrack><HThumb /><HGrip /></HTrack>
                    <TabBar>
                        {["first", "prev", "next", "last"].map((name) => (
                            <TabNav key={name} aria-label={`${name} sheet`}><Icon name={name} size={14} /></TabNav>
                        ))}
                        <AddTab aria-label="Add sheet"><Icon name="addSheet" /></AddTab>
                        {sheets.map((name, i) => (
                            <Tab key={name} $on={i === sheet} onClick={() => setSheet(i)}>{name}</Tab>
                        ))}
                    </TabBar>
                </Main>
                <Sidebar>
                    {decks.map((name) => (
                        <DeckButton key={name} aria-label={name}><Icon name={name} size={16} /></DeckButton>
                    ))}
                    <Handle aria-label="Hide sidebar" />
                </Sidebar>
            </Workspace>
            <StatusBar>
                <StatusCell><Icon name="disk" size={12} /></StatusCell>
                <StatusCell>Sheet 1 of 4</StatusCell>
                <StatusCell>Selected: 1 row, 14 columns</StatusCell>
                <StatusCell>PageStyle_Devis_Travaux</StatusCell>
                <StatusCell $center>English (USA)</StatusCell>
                <StatusCell />
                <StatusCell><Icon name="insertMode" /></StatusCell>
                <StatusCell />
                <StatusCell />
                <StatusCell $center>Average: ; Sum: 0</StatusCell>
                <ZoomCell>
                    <ZoomButton aria-label="Zoom out">−</ZoomButton>
                    <ZoomSlider type="range" aria-label="Zoom" value={zoom} onChange={(e) => setZoom(Number(e.target.value))} />
                    <ZoomButton aria-label="Zoom in">+</ZoomButton>
                </ZoomCell>
                <StatusCell $open>100%</StatusCell>
            </StatusBar>
        </Window>
    )
}

export default App
